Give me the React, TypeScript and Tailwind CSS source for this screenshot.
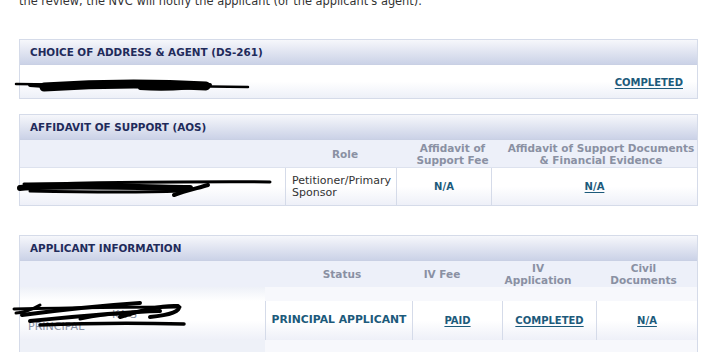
import React from "react";

const FONT = { fontFamily: '"DejaVu Sans", Verdana, sans-serif' };

function PanelHeader({ title }: { title: string }) {
  return (
    <div className="flex h-[25px] items-center border-b border-[#c9d0e4] bg-gradient-to-b from-[#f6f7fb] to-[#cbd2e7] pl-[10px] pt-[1px] text-[10.4px] font-bold text-[#1f2b5b]">
      {title}
    </div>
  );
}

function Scribble({ paths, className }: { paths: { d: string; w: number }[]; className: string }) {
  return (
    <svg className={className} width="300" height="44" style={{ overflow: "visible" }}>
      {paths.map((p, i) => (
        <path
          key={i}
          d={p.d}
          fill="none"
          stroke="#000"
          strokeWidth={p.w}
          strokeLinecap="round"
          strokeLinejoin="round"
        />
      ))}
    </svg>
  );
}

function Link({ children }: { children: React.ReactNode }) {
  return <span className="text-[10px] font-bold text-[#1c5a7b] underline underline-offset-2">{children}</span>;
}

export default function App() {
  return (
    <div className="h-[352px] w-[718px] overflow-hidden bg-white text-[#333]" style={FONT}>
      <p className="-mt-[7px] whitespace-nowrap pl-[19px] text-[11.4px] leading-[16px] text-[#333]">
        the review, the NVC will notify the applicant (or the applicant's agent).
      </p>

      {/* Choice of address & agent */}
      <div className="ml-[19px] mt-[30px] w-[679px] border border-[#d5dbe9]">
        <PanelHeader title="CHOICE OF ADDRESS & AGENT (DS-261)" />
        <div className="relative flex h-[33px] items-center justify-end bg-gradient-to-b from-white via-white to-[#edf0f8] pr-[14px] pt-[2px]">
          <Scribble
            className="absolute left-0 top-0"
            paths={[
              { d: "M -4 19 C 60 20, 150 21, 228 22", w: 2.5 },
              { d: "M 10 20 L 24 21", w: 4 },
              { d: "M 24 22 C 70 19, 130 18, 186 21", w: 9 },
              { d: "M 120 23 C 150 25, 170 23, 190 20", w: 4 },
            ]}
          />
          <Link>COMPLETED</Link>
        </div>
      </div>

      {/* Affidavit of support */}
      <div className="ml-[19px] mt-[15px] w-[679px] border border-[#d5dbe9]">
        <PanelHeader title="AFFIDAVIT OF SUPPORT (AOS)" />
        <div className="grid h-[27px] grid-cols-[270px_110px_105px_1fr] items-center whitespace-nowrap bg-[#edf0f9] text-center text-[10.5px] font-bold leading-[12px] text-[#8a90a3]">
          <div />
          <div>Role</div>
          <div>
            Affidavit of
            <br />
            Support Fee
          </div>
          <div>
            Affidavit of Support Documents
            <br />& Financial Evidence
          </div>
        </div>
        <div className="grid h-[38px] grid-cols-[265px_111px_95px_1fr] border-t border-[#dde2ee] bg-gradient-to-b from-white via-white to-[#eef0f8] text-[11px]">
          <div className="relative">
            <Scribble
              className="absolute left-0 top-0"
              paths={[
                { d: "M 4 16 C 80 15, 170 13, 250 14", w: 3 },
                { d: "M 0 20 C 40 17, 110 19, 170 20", w: 6 },
                { d: "M 10 23 C 60 24, 110 25, 160 23", w: 3 },
                { d: "M 154 27 C 165 23, 178 20, 188 17", w: 4 },
              ]}
            />
          </div>
          <div className="flex items-center border-l border-[#d5dbe9] pl-[6px] leading-[12px]">
            Petitioner/Primary
            <br />
            Sponsor
          </div>
          <div className="flex items-center justify-center border-l border-[#d5dbe9] text-[10px] font-bold text-[#1c5a7b]">
            N/A
          </div>
          <div className="flex items-center justify-center border-l border-[#d5dbe9]">
            <Link>N/A</Link>
          </div>
        </div>
      </div>

      {/* Applicant information */}
      <div className="ml-[19px] mt-[29px] w-[679px] border border-[#d5dbe9]">
        <PanelHeader title="APPLICANT INFORMATION" />
        <div className="grid h-[26px] grid-cols-[266px_112px_88px_104px_1fr] items-center whitespace-nowrap bg-[#edf0f9] text-center text-[10.5px] font-bold leading-[12px] text-[#8a90a3]">
          <div />
          <div>Status</div>
          <div>IV Fee</div>
          <div>
            IV
            <br />
            Application
          </div>
          <div>
            Civil
            <br />
            Documents
          </div>
        </div>
        <div className="grid h-[14px] grid-cols-[245px_1fr] bg-[#f7f8fc]">
          <div className="bg-gradient-to-b from-[#eef1f8] to-white" />
          <div />
        </div>
        <div className="grid h-[39px] grid-cols-[245px_147px_90px_94px_1fr] bg-gradient-to-b from-white via-white to-[#eef0f8] text-[11px]">
          <div className="relative flex flex-col justify-center pl-[8px] leading-[12px] text-[#8790a3]">
            <span className="pl-[84px]">KA S</span>
            <span>PRINCIPAL</span>
            <Scribble
              className="absolute left-0 top-0"
              paths={[
                { d: "M -6 8 C 40 7, 90 6, 160 6", w: 3 },
                { d: "M 20 4 C 10 10, 0 12, -4 12", w: 3 },
                { d: "M 2 14 C 40 9, 90 4, 120 2", w: 4 },
                { d: "M 10 20 C 50 16, 100 11, 140 10", w: 4 },
                { d: "M 100 16 C 120 10, 140 4, 158 5 C 162 10, 150 14, 130 16", w: 4 },
                { d: "M 20 24 C 70 22, 120 22, 164 23", w: 3.5 },
                { d: "M 60 18 C 80 14, 100 12, 110 14", w: 3 },
              ]}
            />
          </div>
          <div className="flex items-center justify-center border-l border-[#d5dbe9] text-[10.8px] font-bold text-[#1c5a7b]">
            PRINCIPAL APPLICANT
          </div>
          <div className="flex items-center justify-center border-l border-[#d5dbe9]">
            <Link>PAID</Link>
          </div>
          <div className="flex items-center justify-center border-l border-[#d5dbe9]">
            <Link>COMPLETED</Link>
          </div>
          <div className="flex items-center justify-center border-l border-[#d5dbe9]">
            <Link>N/A</Link>
          </div>
        </div>
        <div className="grid h-[20px] grid-cols-[245px_1fr] bg-[#f7f8fc]">
          <div className="bg-[#eef1f8]" />
          <div />
        </div>
      </div>
    </div>
  );
}
